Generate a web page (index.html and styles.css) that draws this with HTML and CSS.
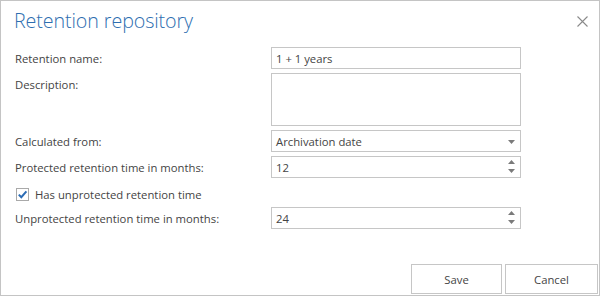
FILE: index.html
```html
<!DOCTYPE html>
<html>
<head>
<meta charset="utf-8">
<link rel="stylesheet" href="styles.css">
</head>
<body>
<div class="dialog">
  <div class="header">
    <h1 class="title">Retention repository</h1>
    <button class="close" aria-label="Close">
      <svg width="11" height="11" viewBox="0 0 11 11"><path d="M0.5 0.5 L10.5 10.5 M10.5 0.5 L0.5 10.5" stroke="#8a8a8a" stroke-width="1.1" fill="none"/></svg>
    </button>
  </div>
  <div class="form">
    <div class="row">
      <label class="label">Retention name:</label>
      <div class="field">1 + 1 years</div>
    </div>
    <div class="row">
      <label class="label">Description:</label>
      <div class="field area"></div>
    </div>
    <div class="row">
      <label class="label">Calculated from:</label>
      <div class="field select">Archivation date
        <svg class="arrow" width="7" height="4" viewBox="0 0 7 4"><path d="M0 0 L7 0 L3.5 4 Z" fill="#7a7a7a"/></svg>
      </div>
    </div>
    <div class="row">
      <label class="label">Protected retention time in months:</label>
      <div class="field spin">12
        <svg class="spinner" width="7" height="13" viewBox="0 0 7 13"><path d="M0 4 L7 4 L3.5 0 Z M0 9 L7 9 L3.5 13 Z" fill="#7a7a7a"/></svg>
      </div>
    </div>
    <div class="row check-row">
      <span class="checkbox">
        <svg width="11" height="11" viewBox="0 0 11 11"><path d="M1.8 5.6 L4.3 8.2 L9.4 2.4" stroke="#2b6cb5" stroke-width="2" fill="none"/></svg>
      </span>
      <span class="check-label">Has unprotected retention time</span>
    </div>
    <div class="row">
      <label class="label">Unprotected retention time in months:</label>
      <div class="field spin">24
        <svg class="spinner" width="7" height="13" viewBox="0 0 7 13"><path d="M0 4 L7 4 L3.5 0 Z M0 9 L7 9 L3.5 13 Z" fill="#7a7a7a"/></svg>
      </div>
    </div>
  </div>
  <div class="footer">
    <button class="btn save">Save</button>
    <button class="btn cancel">Cancel</button>
  </div>
</div>
</body>
</html>
```

FILE: styles.css
```css
html, body {
  margin: 0;
  padding: 0;
  background: #ffffff;
}
body {
  font-family: "Open Sans", "Noto Sans", sans-serif;
  color: #444444;
}
.dialog {
  box-sizing: border-box;
  width: 600px;
  height: 296px;
  border: 1px solid #c4c4c4;
  display: flex;
  flex-direction: column;
  background: #fff;
}
.header {
  display: flex;
  justify-content: space-between;
  align-items: flex-start;
  height: 46px;
}
.title {
  margin: 0;
  padding: 6px 0 0 13px;
  font-weight: 300;
  font-size: 19.7px;
  line-height: 28px;
  color: #2e6eb0;
  letter-spacing: -0.1px;
}
.close {
  border: 0;
  background: none;
  padding: 0;
  margin: 15px 11px 0 0;
  width: 11px;
  height: 11px;
  display: block;
}
.close svg { display: block; }
.form {
  display: flex;
  flex-direction: column;
  gap: 4px;
  padding-left: 14px;
}
.row {
  display: flex;
  align-items: flex-start;
}
.label {
  width: 256px;
  font-size: 11.3px;
  line-height: 16px;
  padding-top: 4px;
  color: #444;
}
.field {
  box-sizing: border-box;
  width: 250px;
  height: 22px;
  border: 1px solid #c6c6c6;
  font-size: 11.3px;
  line-height: 21px;
  padding-left: 4px;
  color: #444;
  position: relative;
}
.area { height: 53px; }
.select .arrow {
  position: absolute;
  right: 5px;
  top: 9px;
}
.spin .spinner {
  position: absolute;
  right: 5px;
  top: 3px;
}
.check-row {
  height: 21px;
  align-items: center;
  padding-left: 1px;
}
.checkbox {
  box-sizing: border-box;
  width: 13px;
  height: 13px;
  border: 1px solid #a9a9a9;
  display: flex;
  align-items: center;
  justify-content: center;
  margin-top: 4px;
}
.checkbox svg { display: block; }
.check-label {
  font-size: 11.3px;
  margin-left: 6px;
  margin-top: 3px;
  color: #444;
}
.footer {
  margin-top: auto;
  display: flex;
  justify-content: flex-end;
  gap: 3px;
  padding: 0 1px 1px 0;
}
.btn {
  box-sizing: border-box;
  height: 30px;
  border: 1px solid #c6c6c6;
  background: #fff;
  font-family: "Open Sans", "Noto Sans", sans-serif;
  font-size: 11.3px;
  color: #444;
  padding: 0;
}
.save { width: 91px; }
.cancel { width: 93px; }
```
